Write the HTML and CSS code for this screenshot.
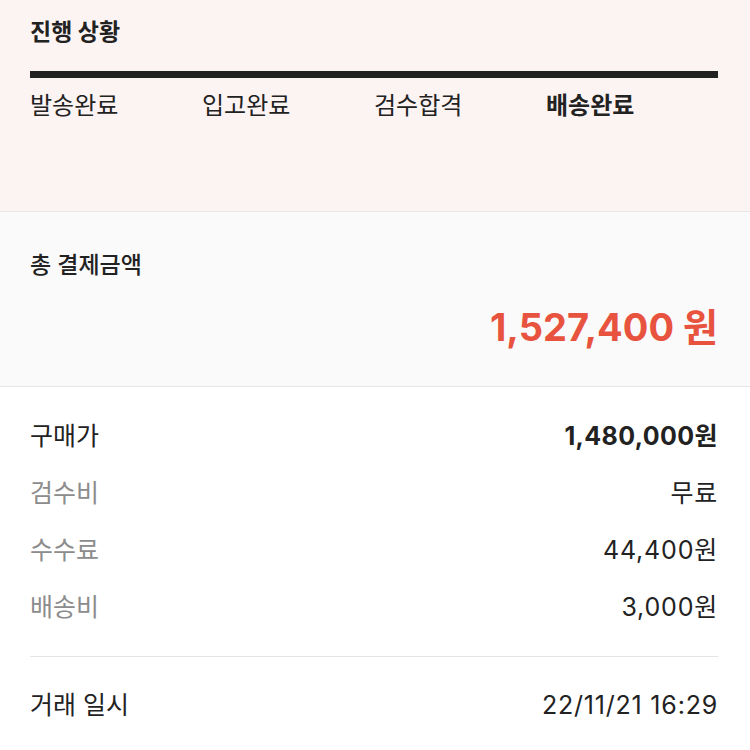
FILE: index.html
```html
<!DOCTYPE html>
<html>
<head>
    <meta charset="utf-8">
    <title>거래 상세</title>
    <link rel="stylesheet" href="styles.css">
</head>
<body>
    <section class="progress">
        <h2 class="progress-title">진행 상황</h2>
        <div class="progress-bar"></div>
        <div class="steps">
            <span class="step">발송완료</span>
            <span class="step">입고완료</span>
            <span class="step">검수합격</span>
            <span class="step current">배송완료</span>
        </div>
    </section>

    <section class="total">
        <div class="total-label">총 결제금액</div>
        <div class="total-amount">1,527,400 원</div>
    </section>

    <section class="details">
        <div class="rows">
            <div class="row">
                <span class="label strong">구매가</span>
                <span class="value bold">1,480,000원</span>
            </div>
            <div class="row">
                <span class="label">검수비</span>
                <span class="value">무료</span>
            </div>
            <div class="row">
                <span class="label">수수료</span>
                <span class="value">44,400원</span>
            </div>
            <div class="row">
                <span class="label">배송비</span>
                <span class="value">3,000원</span>
            </div>
        </div>
        <hr class="divider">
        <div class="row">
            <span class="label strong">거래 일시</span>
            <span class="value">22/11/21 16:29</span>
        </div>
    </section>
</body>
</html>
```

FILE: styles.css
```css
body {
    margin: 0;
    background: #ffffff;
    font-family: Inter, "Noto Sans CJK KR", sans-serif;
    font-size: 25px;
    color: #222222;
}
.progress {
    background: #fcf3f3;
    padding: 16px 32px 89px 30px;
    border-bottom: 1px solid #e8e6e6;
}
.progress-title {
    margin: 0;
    font-size: 23px;
    font-weight: 700;
    line-height: 32px;
}
.progress-bar {
    margin-top: 23px;
    height: 7px;
    background: #222222;
}
.steps {
    display: grid;
    grid-template-columns: repeat(4, 1fr);
    margin-top: 12px;
    line-height: 32px;
    font-size: 24px;
}
.step.current {
    font-weight: 700;
}
.total {
    background: #fafafa;
    padding: 37px 32px 35px 30px;
    border-bottom: 1px solid #e6e6e6;
}
.total-label {
    font-size: 23px;
    font-weight: 500;
    line-height: 32px;
}
.total-amount {
    margin-top: 22px;
    text-align: right;
    font-size: 38px;
    font-weight: 700;
    line-height: 48px;
    color: #e8533f;
}
.details {
    padding: 33px 32px 0 30px;
}
.rows {
    display: flex;
    flex-direction: column;
    gap: 25px;
}
.row {
    display: flex;
    justify-content: space-between;
    line-height: 32px;
}
.label {
    color: #8c8c8c;
}
.label.strong {
    color: #222222;
}
.value {
    letter-spacing: 0.8px;
}
.value.bold {
    font-weight: 700;
    letter-spacing: 0.4px;
}
.divider {
    margin: 33px 0 32px;
    border: none;
    border-top: 1px solid #e4e4e4;
}
```
